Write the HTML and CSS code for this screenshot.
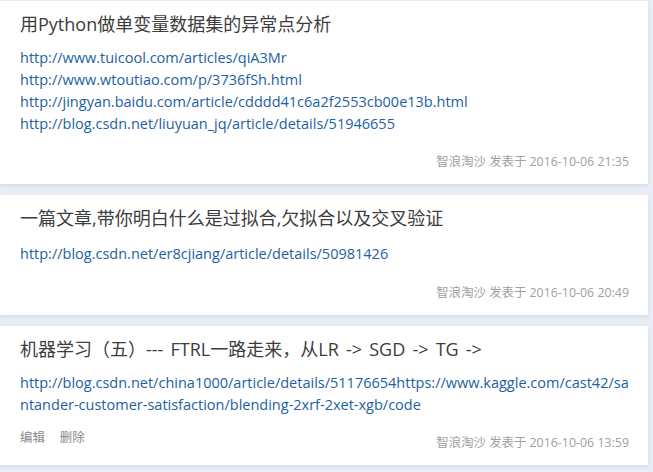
FILE: index.html
```html
<!DOCTYPE html>
<html lang="zh">
<head>
<meta charset="utf-8">
<link rel="stylesheet" href="styles.css">
</head>
<body>
<div class="list">
  <article class="card">
    <h2 class="title">用Python做单变量数据集的异常点分析</h2>
    <div class="links">
      <a href="#">http://www.tuicool.com/articles/qiA3Mr</a>
      <a href="#">http://www.wtoutiao.com/p/3736fSh.html</a>
      <a href="#">http://jingyan.baidu.com/article/cdddd41c6a2f2553cb00e13b.html</a>
      <a href="#">http://blog.csdn.net/liuyuan_jq/article/details/51946655</a>
    </div>
    <div class="foot">
      <div class="ops"></div>
      <div class="meta">智浪淘沙 发表于 2016-10-06 21:35</div>
    </div>
  </article>
  <article class="card card-single">
    <h2 class="title">一篇文章,带你明白什么是过拟合,欠拟合以及交叉验证</h2>
    <div class="links">
      <a href="#">http://blog.csdn.net/er8cjiang/article/details/50981426</a>
    </div>
    <div class="foot">
      <div class="ops"></div>
      <div class="meta">智浪淘沙 发表于 2016-10-06 20:49</div>
    </div>
  </article>
  <article class="card">
    <h2 class="title">机器学习（五）--- FTRL一路走来，从LR -&gt; SGD -&gt; TG -&gt;</h2>
    <div class="links">
      <a href="#">http://blog.csdn.net/china1000/article/details/51176654https://www.kaggle.com/cast42/sa<br>ntander-customer-satisfaction/blending-2xrf-2xet-xgb/code</a>
    </div>
    <div class="foot">
      <div class="ops"><a href="#">编辑</a><a href="#">删除</a></div>
      <div class="meta">智浪淘沙 发表于 2016-10-06 13:59</div>
    </div>
  </article>
</div>
</body>
</html>
```

FILE: styles.css
```css
html, body {
  margin: 0;
  padding: 0;
  background: #e9eef6;
}
body {
  font-family: "Open Sans", "Noto Sans CJK SC", sans-serif;
  color: #333;
}
.list {
  display: flex;
  flex-direction: column;
  gap: 11px;
  padding: 1px 5px 6px 0;
}
.card {
  background: #fff;
  box-shadow: 0 2px 4px rgba(120, 140, 170, 0.18);
  padding: 11px 19px 13px 20px;
}
.title {
  margin: 0;
  font-size: 18px;
  font-weight: normal;
  line-height: 24px;
  word-spacing: 2.5px;
  color: #3d3d3d;
}
.links {
  margin-top: 11px;
  display: flex;
  flex-direction: column;
}
.card-single .links {
  margin-top: 13px;
}
.links a {
  font-size: 14.5px;
  line-height: 22px;
  color: #1d61a2;
  text-decoration: none;
}
.foot {
  margin-top: 18px;
  display: flex;
  justify-content: space-between;
  align-items: flex-start;
  font-size: 12.4px;
  line-height: 18px;
}
.card-single .foot {
  margin-top: 19px;
}
.ops {
  display: flex;
  gap: 15px;
  margin-top: -5px;
}
.ops a {
  color: #888;
  text-decoration: none;
}
.meta {
  color: #a0a0a0;
}
```
